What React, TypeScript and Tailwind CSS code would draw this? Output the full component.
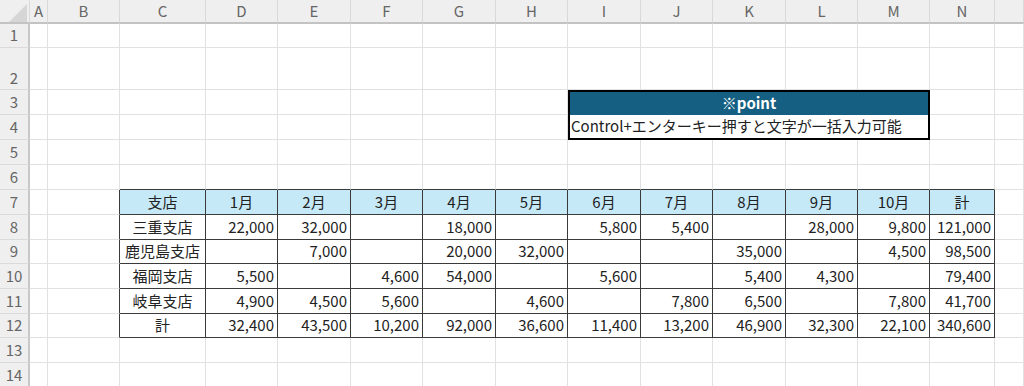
import React from "react";

type Col = { key: string; w: string };

const cols: Col[] = [
  { key: "A", w: "w-[18px]" },
  { key: "B", w: "w-[72px]" },
  { key: "C", w: "w-[86px]" },
  { key: "D", w: "w-[72px]" },
  { key: "E", w: "w-[73px]" },
  { key: "F", w: "w-[72px]" },
  { key: "G", w: "w-[73px]" },
  { key: "H", w: "w-[72px]" },
  { key: "I", w: "w-[73px]" },
  { key: "J", w: "w-[72px]" },
  { key: "K", w: "w-[73px]" },
  { key: "L", w: "w-[72px]" },
  { key: "M", w: "w-[72px]" },
  { key: "N", w: "w-[65px]" },
  { key: "", w: "flex-1" },
];

const rowHeights: Record<number, string> = {
  1: "h-[24px]",
  2: "h-[42px]",
  3: "h-[25px]",
  4: "h-[25px]",
  5: "h-[25px]",
  6: "h-[25px]",
  7: "h-[25px]",
  8: "h-[25px]",
  9: "h-[24px]",
  10: "h-[25px]",
  11: "h-[25px]",
  12: "h-[24px]",
  13: "h-[25px]",
  14: "h-[25px]",
};

const header = ["支店", "1月", "2月", "3月", "4月", "5月", "6月", "7月", "8月", "9月", "10月", "計"];

const data: (string | null)[][] = [
  ["三重支店", "22,000", "32,000", null, "18,000", null, "5,800", "5,400", null, "28,000", "9,800", "121,000"],
  ["鹿児島支店", null, "7,000", null, "20,000", "32,000", null, null, "35,000", null, "4,500", "98,500"],
  ["福岡支店", "5,500", null, "4,600", "54,000", null, "5,600", null, "5,400", "4,300", null, "79,400"],
  ["岐阜支店", "4,900", "4,500", "5,600", null, "4,600", null, "7,800", "6,500", null, "7,800", "41,700"],
  ["計", "32,400", "43,500", "10,200", "92,000", "36,600", "11,400", "13,200", "46,900", "32,300", "22,100", "340,600"],
];

const FONT = { fontFamily: '"Noto Sans CJK JP", "Noto Sans", sans-serif' };

function Cell({ r, ci }: { r: number; ci: number }) {
  const col = cols[ci];
  const rightDark = r >= 7 && r <= 12 && ci >= 1 && ci <= 13;
  const bottomDark = r >= 6 && r <= 12 && ci >= 2 && ci <= 13;
  const rc = rightDark ? "border-r-[#3a3a3a]" : "border-r-[#e1e1e1]";
  const bc = bottomDark ? "border-b-[#3a3a3a]" : "border-b-[#e1e1e1]";
  let content: React.ReactNode = null;
  let align = "justify-center";
  let bg = "bg-white";
  if (r === 7 && ci >= 2 && ci <= 13) {
    content = header[ci - 2];
    bg = "bg-[#c6e9f8]";
  } else if (r >= 8 && r <= 12 && ci >= 2 && ci <= 13) {
    const v = data[r - 8][ci - 2];
    content = v;
    if (ci > 2) align = "justify-end pr-[3px]";
  }
  return (
    <div
      className={`${col.w} shrink-0 h-full border-r border-b ${rc} ${bc} ${bg} flex items-center ${align} text-[15px] text-[#222] whitespace-nowrap overflow-hidden`}
    >
      {content}
    </div>
  );
}

function Row({ r }: { r: number }) {
  const cells: React.ReactNode[] = [];
  for (let ci = 0; ci < cols.length; ci++) {
    if ((r === 3 || r === 4) && ci >= 8 && ci <= 12) {
      if (ci === 8) {
        cells.push(
          r === 3 ? (
            <div
              key={ci}
              className="w-[362px] shrink-0 h-full border-t-2 border-x-2 border-black bg-[#155f82] flex items-center justify-center text-white font-bold text-[15px]"
            >
              ※point
            </div>
          ) : (
            <div
              key={ci}
              className="w-[362px] shrink-0 h-full border-x-2 border-b-2 border-black bg-white flex items-center pl-[1px] text-[15px] text-[#222] whitespace-nowrap"
            >
              Control+エンターキー押すと文字が一括入力可能
            </div>
          )
        );
      }
      continue;
    }
    cells.push(<Cell key={ci} r={r} ci={ci} />);
  }
  return (
    <div className={`flex ${rowHeights[r]}`}>
      <div
        className={`w-[30px] shrink-0 h-full bg-[#efefef] border-r-2 border-r-[#c8c8c8] border-b border-b-[#dadada] flex justify-center ${
          r === 2 ? "items-end" : "items-center"
        } text-[15px] text-[#666]`}
      >
        {r}
      </div>
      {cells}
    </div>
  );
}

export default function App() {
  const rows = Array.from({ length: 14 }, (_, i) => i + 1);
  return (
    <div className="w-[1024px] h-[386px] overflow-hidden bg-white" style={FONT}>
      <div className="flex h-[24px]">
        <div className="w-[30px] shrink-0 h-full bg-[#efefef] border-b-2 border-b-[#c3c3c3] border-r border-r-[#dadada] flex">
          <svg width="29" height="22" viewBox="0 0 29 22">
            <polygon points="9,22 27,22 27,4" fill="#d6d6d6" />
          </svg>
        </div>
        {cols.map((c, i) => (
          <div
            key={i}
            className={`${c.w} shrink-0 h-full bg-[#efefef] border-b-2 border-b-[#c3c3c3] border-r border-r-[#d9d9d9] flex items-center justify-center text-[15px] text-[#666]`}
          >
            {c.key}
          </div>
        ))}
      </div>
      {rows.map((r) => (
        <Row key={r} r={r} />
      ))}
    </div>
  );
}
